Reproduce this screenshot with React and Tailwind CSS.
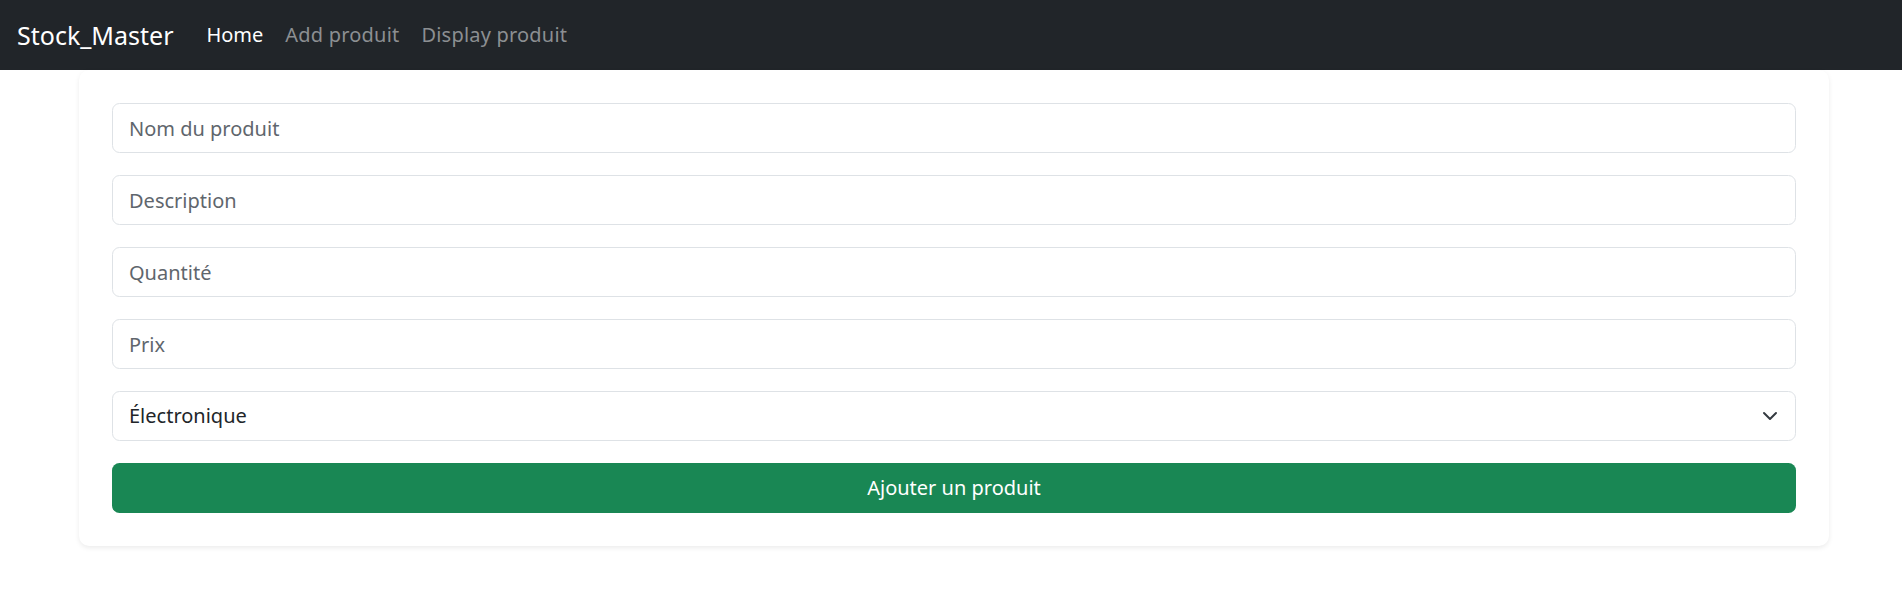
import { useState } from "react";

const font = { fontFamily: '"Segoe UI", "Noto Sans", "Open Sans", sans-serif' };

function Navbar() {
  return (
    <nav className="h-[70px] bg-[#212529] flex items-center pl-[17px]">
      <a href="#" className="text-white text-[25px] mr-[22px] leading-none">
        Stock_Master
      </a>
      <a href="#" className="text-white text-[20px] px-[11px]">Home</a>
      <a href="#" className="text-[#8c8f92] text-[20px] px-[11px] tracking-[0.2px]">Add produit</a>
      <a href="#" className="text-[#8c8f92] text-[20px] px-[11px] tracking-[0.2px]">Display produit</a>
    </nav>
  );
}

function Field({ placeholder }) {
  return (
    <input
      type="text"
      placeholder={placeholder}
      className="h-[50px] w-full border border-[#dee2e6] rounded-[7.5px] px-[16px] text-[20px] text-[#212529] placeholder:text-[#5f666d] bg-white outline-none"
    />
  );
}

export default function App() {
  const [category, setCategory] = useState("electronique");

  return (
    <div className="min-h-screen bg-white" style={font}>
      <Navbar />

      <div className="ml-[79px] w-[1750px] bg-white rounded-[10px] shadow-[0_2px_5px_rgba(0,0,0,0.08)] p-[33px] flex flex-col gap-[22px]">
        <Field placeholder="Nom du produit" />
        <Field placeholder="Description" />
        <Field placeholder="Quantité" />
        <Field placeholder="Prix" />

        {/* Category select */}
        <div className="relative">
          <select
            value={category}
            onChange={(e) => setCategory(e.target.value)}
            className="appearance-none h-[50px] w-full border border-[#dee2e6] rounded-[7.5px] pl-[16px] pr-[50px] text-[20px] text-[#212529] bg-white outline-none"
          >
            <option value="electronique">Électronique</option>
            <option value="vetements">Vêtements</option>
            <option value="alimentation">Alimentation</option>
          </select>
          <svg
            className="absolute right-[18px] top-[19px] pointer-events-none"
            width="16"
            height="12"
            viewBox="0 0 16 12"
            fill="none"
            stroke="#343a40"
            strokeWidth="2"
            strokeLinecap="round"
            strokeLinejoin="round"
          >
            <path d="m2 3 6 6 6-6" />
          </svg>
        </div>

        <button className="h-[50px] w-full bg-[#198754] text-white text-[20px] rounded-[7.5px]">
          Ajouter un produit
        </button>
      </div>
    </div>
  );
}
